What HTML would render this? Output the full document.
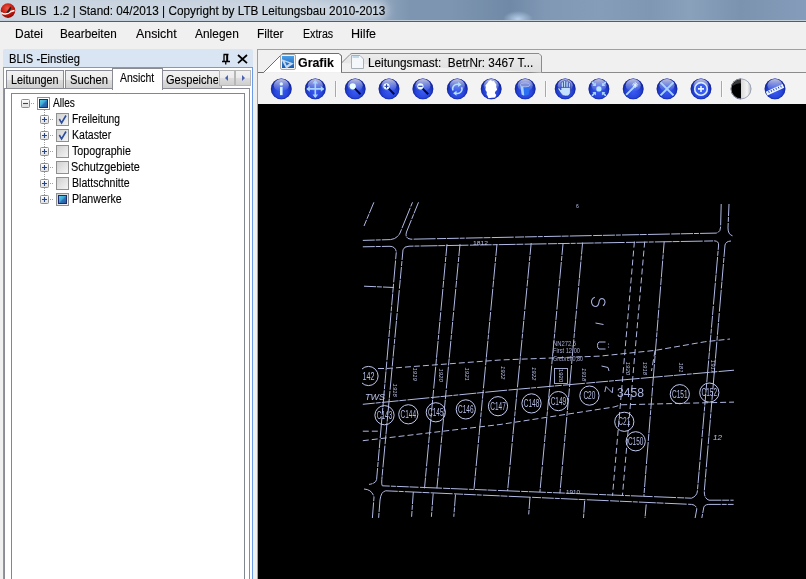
<!DOCTYPE html>
<html><head><meta charset="utf-8">
<style>
*{margin:0;padding:0;box-sizing:border-box}
html,body{width:806px;height:579px;overflow:hidden;background:#f0f0f0;font-family:"Liberation Sans",sans-serif;color:#000;position:relative}
.a{position:absolute}
.t{position:absolute;white-space:nowrap;line-height:1;-webkit-text-stroke:0.12px #000}
#title{left:0;top:0;width:806px;height:22px;overflow:hidden;background:linear-gradient(90deg,#c8d3df 0,#c3cfdc 300px,#9fb2c7 360px,#7d95b0 410px,#7d95b0 450px,#7089a6 510px,#8098b4 545px,#869dba 600px,#7f97b3 650px,#8aa1bc 690px,#7b93af 740px,#859dba 806px)}
#glow{position:absolute;left:-8px;top:2px;width:395px;height:17px;border-radius:9px;background:#cbd6e1;filter:blur(5px)}
#title:before{content:"";position:absolute;left:0;top:0;right:0;height:21px;background:radial-gradient(ellipse 15px 8px at 518px 19px,rgba(185,212,240,.95),rgba(185,212,240,0))}
#tline1{left:0;top:20px;width:806px;height:1px;background:#c3cfdb}
#tline2{left:0;top:21px;width:806px;height:1px;background:#535d6a}
.menu{font-size:12px}
.tree{font-size:12px}
</style></head>
<body>
<div id="title" class="a"><div id="glow"></div></div>
<div id="tline1" class="a"></div>
<div id="tline2" class="a"></div>
<!-- app icon -->
<svg class="a" style="left:0;top:2px" width="18" height="18" viewBox="0 0 18 18">
 <defs><radialGradient id="rg" cx="45%" cy="35%" r="65%"><stop offset="0" stop-color="#e85a4a"/><stop offset=".6" stop-color="#c81a10"/><stop offset="1" stop-color="#8a0a05"/></radialGradient></defs>
 <circle cx="8" cy="8.6" r="7.3" fill="url(#rg)"/>
 <path d="M1.2 10.6 C4 12.5 8 12 11 9.5 L14.5 8.6" stroke="#fff" stroke-width="1.6" fill="none"/>
 <path d="M6 11 L10.5 4.5 L11.5 6 L9 10.5 Z" fill="#222"/>
</svg>
<div id="tx_title" class="t" style="left:21.20px;top:5.48px;font-size:12px;color:#000;transform:scaleX(0.9805);transform-origin:0 0">BLIS&nbsp; 1.2 | Stand: 04/2013 | Copyright by LTB Leitungsbau 2010-2013</div>

<!-- menu -->
<div id="tx_datei" class="t menu" style="left:14.76px;font-size:12px;top:27.72px;transform:scaleX(0.9974);transform-origin:0 0">Datei</div>
<div id="tx_bearb" class="t menu" style="left:60.30px;font-size:12px;top:27.72px;transform:scaleX(0.9761);transform-origin:0 0">Bearbeiten</div>
<div id="tx_ans" class="t menu" style="left:136.00px;font-size:12px;top:27.72px;transform:scaleX(1.0328);transform-origin:0 0">Ansicht</div>
<div id="tx_anl" class="t menu" style="left:195.10px;font-size:12px;top:27.72px;transform:scaleX(0.9943);transform-origin:0 0">Anlegen</div>
<div id="tx_filt" class="t menu" style="left:257.08px;font-size:12px;top:27.72px;transform:scaleX(0.9943);transform-origin:0 0">Filter</div>
<div id="tx_extr" class="t menu" style="left:302.64px;font-size:12px;top:27.72px;transform:scaleX(0.8862);transform-origin:0 0">Extras</div>
<div id="tx_hilfe" class="t menu" style="left:351.30px;font-size:12px;top:27.72px;transform:scaleX(1.0453);transform-origin:0 0">Hilfe</div>

<!-- LEFT PANEL -->
<div class="a" style="left:3px;top:49px;width:250px;height:18px;background:#dae5f3;border-radius:2px 2px 0 0"></div>
<div id="tx_head" class="t" style="left:8.76px;top:53.44px;font-size:12px;transform:scaleX(0.9338);transform-origin:0 0">BLIS -Einstieg</div>
<!-- pin -->
<svg class="a" style="left:221px;top:53px" width="10" height="12" viewBox="0 0 10 12">
 <path d="M2.5 1.5 H7.5 M3 1.5 V8 M6.5 1.5 V8 M1 8.5 H9 M4.75 8.5 V11.5" stroke="#000" stroke-width="1.3" fill="none"/>
 <rect x="5.2" y="1.5" width="1.3" height="7" fill="#000"/>
</svg>
<!-- close X -->
<svg class="a" style="left:237px;top:54px" width="11" height="10" viewBox="0 0 11 10">
 <path d="M1 1 L10 9.2 M10 1 L1 9.2" stroke="#000" stroke-width="1.7" fill="none"/>
</svg>
<!-- blue border -->
<div class="a" style="left:3px;top:67px;width:250px;height:520px;border:1px solid #6c9be8;background:#fff"></div>
<!-- tab panel border -->
<div class="a" style="left:4px;top:88px;width:246px;height:500px;border:1px solid #898c95;background:#fff"></div>
<!-- tabs -->
<div class="a" style="left:6px;top:70px;width:58px;height:18px;border:1px solid #898c95;border-bottom:none;background:linear-gradient(#f2f2f2,#ebebeb 50%,#dddddd 51%,#cfcfcf)"></div>
<div id="tx_leit" class="t" style="left:11.44px;top:73.90px;font-size:12px;transform:scaleX(0.9012);transform-origin:0 0">Leitungen</div>
<div class="a" style="left:65px;top:70px;width:48px;height:18px;border:1px solid #898c95;border-bottom:none;background:linear-gradient(#f2f2f2,#ebebeb 50%,#dddddd 51%,#cfcfcf)"></div>
<div id="tx_such" class="t" style="left:70.20px;top:73.90px;font-size:12px;transform:scaleX(0.9365);transform-origin:0 0">Suchen</div>
<div class="a" style="left:162px;top:70px;width:60px;height:18px;border:1px solid #898c95;border-bottom:none;background:linear-gradient(#f2f2f2,#ebebeb 50%,#dddddd 51%,#cfcfcf)"></div>
<div class="a" style="left:163px;top:71px;width:55px;height:18px;overflow:hidden"><div id="tx_gesp" class="t" style="left:3.2px;top:2.9px;font-size:12px;transform:scaleX(0.92);transform-origin:0 0">Gespeicherte</div></div>
<div class="a" style="left:112px;top:68px;width:51px;height:22px;border:1px solid #898c95;border-bottom:none;background:#fff"></div>
<div id="tx_anstab" class="t" style="left:119.80px;top:72.14px;font-size:12px;transform:scaleX(0.8708);transform-origin:0 0">Ansicht</div>
<!-- scroll buttons -->
<div class="a" style="left:219px;top:70px;width:16px;height:16px;border:1px solid #b7b7b7;background:linear-gradient(#f2f2f2,#ebebeb 50%,#dddddd 51%,#cfcfcf)"></div>
<div class="a" style="left:235px;top:70px;width:16px;height:16px;border:1px solid #b7b7b7;background:linear-gradient(#f2f2f2,#ebebeb 50%,#dddddd 51%,#cfcfcf)"></div>
<svg class="a" style="left:219px;top:70px" width="32" height="16" viewBox="0 0 32 16">
 <path d="M9 5 L6 8 L9 11 Z" fill="#4a62b0"/>
 <path d="M23 5 L26 8 L23 11 Z" fill="#4a62b0"/>
</svg>
<!-- tree box -->
<div class="a" style="left:11px;top:93px;width:234px;height:500px;border:1px solid #82868f;background:#fff"></div>

<!-- tree -->
<svg class="a" style="left:12px;top:94px" width="120" height="120" viewBox="12 94 120 120">
 <defs>
  <linearGradient id="cbg" x1="0" y1="0" x2="1" y2="1"><stop offset="0" stop-color="#62d8e0"/><stop offset=".49" stop-color="#3aa2d8"/><stop offset=".51" stop-color="#2f78bc"/><stop offset="1" stop-color="#2a5298"/></linearGradient>
  <linearGradient id="cbb" x1="0" y1="0" x2="1" y2="1"><stop offset="0" stop-color="#cfcfcf"/><stop offset="1" stop-color="#f6f6f6"/></linearGradient>
  <linearGradient id="pbx" x1="0" y1="0" x2="0" y2="1"><stop offset="0" stop-color="#fff"/><stop offset="1" stop-color="#e0e0e0"/></linearGradient>
 </defs>
 <!-- minus box Alles -->
 <rect x="21.5" y="99.5" width="8" height="8" rx="1" fill="url(#pbx)" stroke="#8e8f8f"/>
 <path d="M23 103.5 H28" stroke="#26448e" stroke-width="1.1"/>
 <path d="M31 103.5 h1 M33 103.5 h1" stroke="#a0a0a0"/>
 <!-- Alles checkbox -->
 <rect x="37.5" y="97.5" width="12" height="12" fill="#fff" stroke="#8e8f8f"/>
 <rect x="39.5" y="99.5" width="8" height="8" fill="url(#cbg)" stroke="#1c2c70" stroke-width="1"/>
 <!-- vertical dotted line -->
 <path d="M44.5 110 V200" stroke="#a0a0a0" stroke-dasharray="1 1"/>
 <rect x="40.5" y="115.5" width="8" height="8" rx="1" fill="url(#pbx)" stroke="#8e8f8f"/>
 <path d="M42 119.5 H47 M44.5 117.0 V122.0" stroke="#26448e" stroke-width="1.1"/>
 <path d="M50 119.5 h1 M52 119.5 h1" stroke="#a0a0a0"/>
 <rect x="56.5" y="113.5" width="12" height="12" fill="url(#cbb)" stroke="#8e8f8f"/>
 <path d="M59.3 119 L61.6 123 L66 115.5" stroke="#2c4c9c" stroke-width="1.6" fill="none"/>
 <rect x="40.5" y="131.5" width="8" height="8" rx="1" fill="url(#pbx)" stroke="#8e8f8f"/>
 <path d="M42 135.5 H47 M44.5 133.0 V138.0" stroke="#26448e" stroke-width="1.1"/>
 <path d="M50 135.5 h1 M52 135.5 h1" stroke="#a0a0a0"/>
 <rect x="56.5" y="129.5" width="12" height="12" fill="url(#cbb)" stroke="#8e8f8f"/>
 <path d="M59.3 135 L61.6 139 L66 131.5" stroke="#2c4c9c" stroke-width="1.6" fill="none"/>
 <rect x="40.5" y="147.5" width="8" height="8" rx="1" fill="url(#pbx)" stroke="#8e8f8f"/>
 <path d="M42 151.5 H47 M44.5 149.0 V154.0" stroke="#26448e" stroke-width="1.1"/>
 <path d="M50 151.5 h1 M52 151.5 h1" stroke="#a0a0a0"/>
 <rect x="56.5" y="145.5" width="12" height="12" fill="url(#cbb)" stroke="#8e8f8f"/>
 <rect x="40.5" y="163.5" width="8" height="8" rx="1" fill="url(#pbx)" stroke="#8e8f8f"/>
 <path d="M42 167.5 H47 M44.5 165.0 V170.0" stroke="#26448e" stroke-width="1.1"/>
 <path d="M50 167.5 h1 M52 167.5 h1" stroke="#a0a0a0"/>
 <rect x="56.5" y="161.5" width="12" height="12" fill="url(#cbb)" stroke="#8e8f8f"/>
 <rect x="40.5" y="179.5" width="8" height="8" rx="1" fill="url(#pbx)" stroke="#8e8f8f"/>
 <path d="M42 183.5 H47 M44.5 181.0 V186.0" stroke="#26448e" stroke-width="1.1"/>
 <path d="M50 183.5 h1 M52 183.5 h1" stroke="#a0a0a0"/>
 <rect x="56.5" y="177.5" width="12" height="12" fill="url(#cbb)" stroke="#8e8f8f"/>
 <rect x="40.5" y="195.5" width="8" height="8" rx="1" fill="url(#pbx)" stroke="#8e8f8f"/>
 <path d="M42 199.5 H47 M44.5 197.0 V202.0" stroke="#26448e" stroke-width="1.1"/>
 <path d="M50 199.5 h1 M52 199.5 h1" stroke="#a0a0a0"/>
 <rect x="56.5" y="193.5" width="12" height="12" fill="url(#cbb)" stroke="#8e8f8f"/>
 <rect x="58.5" y="195.5" width="8" height="8" fill="url(#cbg)" stroke="#1c2c70" stroke-width="1"/>
</svg>
<div id="tx_alles" class="t tree" style="left:53.00px;top:96.96px;font-size:12px;transform:scaleX(0.8431);transform-origin:0 0">Alles</div>
<div id="tx_frei" class="t tree" style="left:71.64px;top:112.96px;font-size:12px;transform:scaleX(0.8575);transform-origin:0 0">Freileitung</div>
<div id="tx_kat" class="t tree" style="left:71.64px;top:128.96px;font-size:12px;transform:scaleX(0.8780);transform-origin:0 0">Kataster</div>
<div id="tx_topo" class="t tree" style="left:72.28px;top:144.96px;font-size:12px;transform:scaleX(0.8911);transform-origin:0 0">Topographie</div>
<div id="tx_schutz" class="t tree" style="left:71.48px;top:160.96px;font-size:12px;transform:scaleX(0.9060);transform-origin:0 0">Schutzgebiete</div>
<div id="tx_blatt" class="t tree" style="left:71.64px;top:176.96px;font-size:12px;transform:scaleX(0.8799);transform-origin:0 0">Blattschnitte</div>
<div id="tx_plan" class="t tree" style="left:71.64px;top:192.96px;font-size:12px;transform:scaleX(0.8863);transform-origin:0 0">Planwerke</div>

<!-- RIGHT PANEL -->
<div class="a" style="left:257px;top:49px;width:560px;height:540px;border:1px solid #a0a0a0;background:#f0f0f0"></div>
<div class="a" style="left:258px;top:73px;width:548px;height:31px;background:#f3f3f3"></div>
<div class="a" style="left:258px;top:104px;width:548px;height:475px;background:#000"></div>
<!--MAP--><svg class="a" style="left:258px;top:104px;will-change:transform" width="548" height="475" viewBox="258 104 548 475">
<defs><clipPath id="mc"><rect x="362" y="195" width="380" height="330"/></clipPath></defs>
<g clip-path="url(#mc)" fill="none" stroke="#b2bae4" stroke-width="1" stroke-dasharray="12 .9 5 1.1 17 .7 7 1.2 22 1.4 9 .8">
<path d="M362.8 240.4 L390.5 239.6 Q397 239 400 233 L412.5 202.3"/>
<path d="M418.5 202.3 L406.5 232 Q404.5 238.8 411 239.2 L716 233.1 Q720.5 232.5 720.6 227 L721.2 204"/>
<path d="M729 204 L728 228 Q728 234.5 732.5 235.8"/>
<path d="M362.8 246.8 L390 246.3 Q395.5 246.5 396.3 252 L376.6 479.5 Q376 483.5 369 484.4"/>
<path d="M403 249.8 Q404 246.3 409 246.2 L714.7 240.9 Q718.8 241.2 718.6 245 L697.4 491 Q697 496 691.5 498.2 L382.3 485.8 Q381.4 485 381.8 479.5 L403 249.8"/>
<path d="M725 245 Q725.8 241.3 731 241 M725 245 L704.3 491 Q704 498.5 709 500.2 L733.6 500.2"/>
<path d="M385.8 490.8 L691.5 504.4 Q696 504.6 696.8 509 L695.1 518"/>
<path d="M380 500 Q381 491.5 385.8 490.8 M380 500 L378.6 518"/>
<path d="M364 489 Q372 489.5 374 497 L372.4 518"/>
<path d="M708.8 504.4 Q703.5 504.6 703.5 509 L701.8 518 M708.8 504.4 L733.6 504.4"/>
<path d="M373.9 202.3 L364 226"/>
<path d="M364 286.2 L393.9 287.5"/>
<path d="M447 244.2 L424.5 488.3"/>
<path d="M460 244.2 L436.9 488.3"/>
<path d="M497 244 L474 488.8"/>
<path d="M531.2 243 L507.6 490.8"/>
<path d="M563.1 243 L539.9 492"/>
<path d="M582.6 242.6 L559.9 493.3"/>
<path d="M664.2 241.6 L643.8 497"/>
<path d="M413.3 492 L411.6 516.8"/>
<path d="M433.2 493.3 L431.4 516.8"/>
<path d="M455.5 494.5 L453.8 516.8"/>
<path d="M530 497 L528.7 514.4"/>
<path d="M584.7 500.7 L583.5 518"/>
<path d="M646.2 504.4 L645 518"/>
<path d="M362.8 404.3 L500 390.8 L640 378.4 L734 370.2"/>
</g>
<g clip-path="url(#mc)" fill="none" stroke="#b0b8e0" stroke-width="1" stroke-dasharray="6 3">
<path d="M634.4 241.6 L612.5 495.8"/>
<path d="M644.7 241.6 L622.4 495.8"/>
<path d="M378 368.5 L386.6 368.5 L500 360 L600 356.1 L655.1 350.4 L704.5 341.8 L730 339"/>
<path d="M362.8 440.7 L500 424.5 L614 407 L620.9 404.8 L734 402.1"/>
<path d="M362.8 431.2 L378 431.2"/>
<path d="M655.1 350.4 L651.5 371"/>
</g>
<g clip-path="url(#mc)" fill="none" stroke="#c0c8ee" stroke-width="1">
<circle cx="368.5" cy="376" r="9.6"/>
<circle cx="384.5" cy="415.2" r="9.6"/>
<circle cx="408.3" cy="414.3" r="9.6"/>
<circle cx="435.8" cy="412.3" r="9.6"/>
<circle cx="465.8" cy="409.4" r="9.6"/>
<circle cx="498" cy="406.2" r="9.6"/>
<circle cx="531.5" cy="403.4" r="9.6"/>
<circle cx="558.4" cy="401.1" r="9.6"/>
<circle cx="589.4" cy="395.6" r="9.6"/>
<circle cx="679.8" cy="394.2" r="9.6"/>
<circle cx="709.3" cy="392.6" r="9.6"/>
<circle cx="624.3" cy="421.8" r="9.6"/>
<circle cx="635.7" cy="441.3" r="9.6"/>
</g>
<g clip-path="url(#mc)" fill="#b4bce4" font-family="Liberation Sans" font-size="10" text-anchor="middle">
<text x="368.5" y="379.6" textLength="12" lengthAdjust="spacingAndGlyphs">142</text>
<text x="384.5" y="418.8" textLength="15.5" lengthAdjust="spacingAndGlyphs">C143</text>
<text x="408.3" y="417.90000000000003" textLength="15.5" lengthAdjust="spacingAndGlyphs">C144</text>
<text x="435.8" y="415.90000000000003" textLength="15.5" lengthAdjust="spacingAndGlyphs">C145</text>
<text x="465.8" y="413.0" textLength="15.5" lengthAdjust="spacingAndGlyphs">C146</text>
<text x="498" y="409.8" textLength="15.5" lengthAdjust="spacingAndGlyphs">C147</text>
<text x="531.5" y="407.0" textLength="15.5" lengthAdjust="spacingAndGlyphs">C148</text>
<text x="558.4" y="404.70000000000005" textLength="15.5" lengthAdjust="spacingAndGlyphs">C149</text>
<text x="589.4" y="399.20000000000005" textLength="12" lengthAdjust="spacingAndGlyphs">C20</text>
<text x="679.8" y="397.8" textLength="15.5" lengthAdjust="spacingAndGlyphs">C151</text>
<text x="709.3" y="396.20000000000005" textLength="15.5" lengthAdjust="spacingAndGlyphs">C152</text>
<text x="624.3" y="425.40000000000003" textLength="12" lengthAdjust="spacingAndGlyphs">C21</text>
<text x="635.7" y="444.90000000000003" textLength="15.5" lengthAdjust="spacingAndGlyphs">C150</text>
</g>
<g clip-path="url(#mc)" fill="#b8c0e6" font-family="Liberation Sans">
<text x="394.8" y="390.3" font-size="6" transform="rotate(90 394.8 390.3)" text-anchor="middle" dominant-baseline="central" font-style="italic">1918</text>
<text x="414.7" y="374.2" font-size="6" transform="rotate(90 414.7 374.2)" text-anchor="middle" dominant-baseline="central" font-style="italic">1919</text>
<text x="440.7" y="375.1" font-size="6" transform="rotate(90 440.7 375.1)" text-anchor="middle" dominant-baseline="central" font-style="italic">1920</text>
<text x="466.8" y="374.2" font-size="6" transform="rotate(90 466.8 374.2)" text-anchor="middle" dominant-baseline="central" font-style="italic">1921</text>
<text x="502.8" y="372.7" font-size="6" transform="rotate(90 502.8 372.7)" text-anchor="middle" dominant-baseline="central" font-style="italic">1922</text>
<text x="534.2" y="373.7" font-size="6" transform="rotate(90 534.2 373.7)" text-anchor="middle" dominant-baseline="central" font-style="italic">1922</text>
<text x="583.6" y="374.6" font-size="6" transform="rotate(90 583.6 374.6)" text-anchor="middle" dominant-baseline="central" font-style="italic">1918</text>
<text x="628.1" y="368.4" font-size="6" transform="rotate(90 628.1 368.4)" text-anchor="middle" dominant-baseline="central" font-style="italic">1920</text>
<text x="644.6" y="368.4" font-size="6" transform="rotate(90 644.6 368.4)" text-anchor="middle" dominant-baseline="central" font-style="italic">1918</text>
<text x="680.7" y="367.5" font-size="6" transform="rotate(90 680.7 367.5)" text-anchor="middle" dominant-baseline="central" font-style="italic">181</text>
<text x="713" y="366.5" font-size="6" transform="rotate(90 713 366.5)" text-anchor="middle" dominant-baseline="central" font-style="italic">1917</text>
<text x="365" y="400" font-size="9" font-style="italic" textLength="20" lengthAdjust="spacingAndGlyphs">TWS</text>
<text x="617" y="397" font-size="13" textLength="27" lengthAdjust="spacingAndGlyphs" font-weight="normal" fill="#aab2dc">3458</text>
<path d="M604.8 392 L606 386.5 L612.3 392.8 L612.8 387.2" stroke="#a8b0dc" stroke-width="1" fill="none"/>
<path d="M594.8 297.2 Q591.3 298.8 591.5 302 Q592 306.5 596 306.5 Q598.5 306 599 302 Q599.5 298.5 602 298.5 Q605 299 605 302.5 Q604.8 304.5 603 305.8" stroke="#a8b0dc" stroke-width="1.1" fill="none"/>
<path d="M595.5 323 L603.5 324.5" stroke="#b0b8e0" stroke-width="1"/>
<path d="M605.5 342 L599 342 Q597.5 342.5 597.5 345.5 Q597.5 348.5 599 349 L605.5 349" stroke="#b0b8e0" stroke-width="1" fill="none"/><circle cx="608.5" cy="344" r=".6" fill="#b0b8e0"/><circle cx="608.5" cy="347" r=".6" fill="#b0b8e0"/>
<path d="M601.5 366 L608 367.5 L609 371" stroke="#b0b8e0" stroke-width="1" fill="none"/>
<text x="473" y="245" font-size="6" textLength="15" lengthAdjust="spacingAndGlyphs">1812</text>
<text x="566" y="494" font-size="6" textLength="14" lengthAdjust="spacingAndGlyphs">1910</text>
<text x="713" y="440" font-size="8" font-style="italic">12</text>
<text x="576" y="208" font-size="5">6</text>

</g>
<g fill="#a6abd2" font-family="Liberation Sans" font-size="7.2">
<text x="553" y="345.5" textLength="23" lengthAdjust="spacingAndGlyphs">NN272,5</text>
<text x="553" y="353" textLength="27" lengthAdjust="spacingAndGlyphs">First 12,00</text>
<text x="553" y="360.5" textLength="30" lengthAdjust="spacingAndGlyphs">Grebrel 0,80</text>
</g>
<rect x="554.5" y="368.5" width="13" height="15" fill="none" stroke="#b0b8e0" stroke-width=".9"/>
<text x="560.8" y="375.6" font-size="6" transform="rotate(90 560.8 375.6)" text-anchor="middle" dominant-baseline="central" fill="#b8c0e6" font-family="Liberation Sans">1920</text>
</svg><!--/MAP-->
<!-- right tab strip -->
<svg class="a" style="left:258px;top:50px" width="548" height="54" viewBox="258 50 548 54">
 <defs>
  <linearGradient id="tabsel" x1="0" y1="0" x2="0" y2="1"><stop offset="0" stop-color="#ffffff"/><stop offset="1" stop-color="#ffffff"/></linearGradient>
  <linearGradient id="tabun" x1="0" y1="0" x2="0" y2="1"><stop offset="0" stop-color="#ececec"/><stop offset="1" stop-color="#e0e0e0"/></linearGradient>
  <radialGradient id="sph" cx="50%" cy="62%" r="52%"><stop offset="0" stop-color="#3a5cf4"/><stop offset=".6" stop-color="#2846dc"/><stop offset=".85" stop-color="#1a34bc"/><stop offset="1" stop-color="#1428a0"/></radialGradient>
  <linearGradient id="hl" x1="0" y1="0" x2="0" y2="1"><stop offset="0" stop-color="#fff" stop-opacity=".72"/><stop offset=".55" stop-color="#fff" stop-opacity=".3"/><stop offset="1" stop-color="#fff" stop-opacity="0"/></linearGradient>
  <linearGradient id="icog" x1="0" y1="0" x2="0" y2="1"><stop offset="0" stop-color="#4aa0ea"/><stop offset="1" stop-color="#1858b0"/></linearGradient>
  <linearGradient id="cg" x1="0" y1="0" x2="1" y2="0"><stop offset="0" stop-color="#000"/><stop offset=".5" stop-color="#000"/><stop offset=".5" stop-color="#d8d8d8"/><stop offset=".8" stop-color="#f4f4f4"/><stop offset="1" stop-color="#b8b8b8"/></linearGradient>
  <g id="ball"><circle r="10.4" fill="url(#sph)"/><circle r="10" fill="none" stroke="#1424a0" stroke-width=".8" stroke-opacity=".5"/><ellipse cx="0" cy="-3.6" rx="7.6" ry="6.2" fill="url(#hl)"/></g>
 </defs>
 <!-- tab line -->
 <path d="M258 72.5 H263.5 L281.5 54.5 Q282.5 53.5 284 53.5 H339 L341.5 56 V72.5 H806" fill="none" stroke="#8b8b8b"/>
 <path d="M264 72 L282 54 H339 L341 56 V72 Z" fill="#fff"/>
 <path d="M341.5 63 L350 54.5 Q351 53.5 352 53.5 H539 L541.5 56 V72.5" fill="url(#tabun)" stroke="#8b8b8b"/>
 <path d="M258 72.5 H263.5 L281.5 54.5 Q282.5 53.5 284 53.5 H339 L341.5 56 V72.5" fill="none" stroke="#6e6e6e"/>
 <!-- grafik icon -->
 <rect x="280.5" y="54.5" width="15" height="15" rx="1.5" fill="#f4f4f4" stroke="#a8a8a8"/>
 <rect x="282" y="56" width="12" height="12" fill="url(#icog)"/>
 <path d="M281.2 59 L293.8 63.6 L286.2 68.8 Z M284.8 61.6 L289.6 63.5 L286.6 65.6 Z" fill="#c4d8ee" fill-rule="evenodd"/>
 <!-- page icon -->
 <path d="M351.5 55.5 H360 L363.5 59 V68.5 H351.5 Z" fill="#f4f8fb" stroke="#a8b0b8"/>
 <path d="M352.5 57 H359" stroke="#9cc4dc" stroke-width="1.2"/>
 <!-- toolbar separators -->
 <path d="M335.5 81 V97 M545.5 81 V97 M721.5 81 V97" stroke="#a8a8a8"/>
 <path d="M336.5 81 V97 M546.5 81 V97 M722.5 81 V97" stroke="#fafafa"/>
 <!-- icons -->
 <g transform="translate(281.3 88.9)"><use href="#ball"/><circle cx="0" cy="-5" r="1.7" fill="#e0f6ff"/><path d="M-1.3 -2 H1.3 V6.2 H-1.3 Z" fill="#d0f0ff"/></g>
 <g transform="translate(315.3 88.9)"><use href="#ball"/><path d="M0 -8 V8 M-8 0 H8" stroke="#a8d2ff" stroke-width="1.6"/><path d="M0 -9 L-2.8 -5.5 H2.8Z M0 9 L-2.8 5.5 H2.8Z M-9 0 L-5.5 -2.8 V2.8Z M9 0 L5.5 -2.8 V2.8Z" fill="#a8d2ff"/></g>
 <g transform="translate(355.2 88.9)"><use href="#ball"/><path d="M-0.5 -0.5 L5.3 5.3" stroke="#000a40" stroke-width="2"/><circle cx="-2.5" cy="-2.6" r="3.1" fill="#eaffff"/></g>
 <g transform="translate(389 88.9)"><use href="#ball"/><path d="M-0.5 -0.5 L5.3 5.3" stroke="#000a40" stroke-width="2"/><circle cx="-2.5" cy="-2.6" r="3.1" fill="#eaffff"/><path d="M-4.5 -2.6 H-0.5 M-2.5 -4.6 V-0.6" stroke="#2a3ab0" stroke-width="1"/></g>
 <g transform="translate(422.9 88.9)"><use href="#ball"/><path d="M-0.5 -0.5 L5.3 5.3" stroke="#000a40" stroke-width="2"/><circle cx="-2.5" cy="-2.6" r="3.1" fill="#eaffff"/><path d="M-4.6 -2.6 H-0.4" stroke="#2a3ab0" stroke-width="1.2"/></g>
 <g transform="translate(457.3 88.9)"><use href="#ball"/><path d="M1.2 -4.4 A4.5 4.5 0 0 0 -4.3 1.6 M-1.2 4.4 A4.5 4.5 0 0 0 4.3 -1.6" stroke="#b4e0ff" stroke-width="1.5" fill="none"/><path d="M0.8 -6.9 L4.2 -4.3 L0.8 -1.9Z M-0.8 6.9 L-4.2 4.3 L-0.8 1.9Z" fill="#b4e0ff"/></g>
 <g transform="translate(491.2 88.9)"><use href="#ball"/><path d="M-2.5 -8 L-0.5 -8.8 L1.2 -7.6 L2.8 -8 L3.8 -6.2 L5.2 -4.5 L5 -1.8 L6 0.8 L4.2 2.6 L3.6 4 L5 6.2 L4 8.6 L0.5 8.8 L-2.8 9.3 L-3.6 7.2 L-4.6 5.6 L-4.4 3.2 L-5.8 1.2 L-5.4 -1.6 L-5.8 -3.6 L-4.4 -5.2 L-3.4 -6.4 Z" fill="#fff"/></g>
 <g transform="translate(525.2 88.9)"><use href="#ball"/><path d="M-5 -4 L-3.5 5.5 Q0 7.5 3.5 5.5 L5 -4 Z" fill="#2a70f0"/><path d="M-5 -4 L-3.5 5.5 Q-2 6.5 -1 6.5 L-2 -3.5 Z" fill="#a8d0ff"/><ellipse cx="0" cy="-4" rx="5" ry="2" fill="#8090d8" stroke="#c0d0ff" stroke-width=".6"/></g>
 <g transform="translate(565.2 88.9)"><use href="#ball"/><g fill="#c4e2ff" stroke="#1a2c90" stroke-width=".6"><path d="M-4 -1 V-6 Q-4 -7.2 -2.9 -7.2 Q-1.8 -7.2 -1.8 -6 V-1 Z"/><path d="M-1.6 -1 V-7.4 Q-1.6 -8.6 -0.5 -8.6 Q0.6 -8.6 0.6 -7.4 V-1 Z"/><path d="M0.8 -1 V-7 Q0.8 -8.2 1.9 -8.2 Q3 -8.2 3 -7 V-1 Z"/><path d="M3.2 -0.5 V-5.2 Q3.2 -6.3 4.2 -6.3 Q5.2 -6.3 5.2 -5.2 V1 Z"/><path d="M-4.2 -1.5 H5.2 V3 Q5 7.2 0.5 7.2 Q-2.5 7.2 -4 5 L-7.2 0.2 Q-7.5 -1 -6.4 -1.2 Q-5.4 -1 -4.2 1 Z"/></g></g>
 <g transform="translate(598.9 88.9)"><use href="#ball"/><circle r="2.6" fill="#b8e8ff"/><path d="M-7 -7 L-3.5 -3.5 M7 -7 L3.5 -3.5 M-7 7 L-3.5 3.5 M7 7 L3.5 3.5" stroke="#a8d4ff" stroke-width="1.6"/><path d="M-3 -3 H-6.5 L-3 -6.5Z M3 -3 H6.5 L3 -6.5Z M-3 3 H-6.5 L-3 6.5Z M3 3 H6.5 L3 6.5Z" fill="#a8d4ff"/></g>
 <g transform="translate(633.2 88.9)"><use href="#ball"/><path d="M-7 6 L3 -4" stroke="#b0dcff" stroke-width="1.8"/><path d="M2 -7 V-1 M-1 -4 H5 M0 -6 L4 -2 M4 -6 L0 -2" stroke="#e0f4ff" stroke-width=".9"/></g>
 <g transform="translate(667 88.9)"><use href="#ball"/><path d="M-6.5 -6.5 L6.5 6.5 M6.5 -6.5 L-6.5 6.5" stroke="#a8d4ff" stroke-width="2"/></g>
 <g transform="translate(701 88.9)"><use href="#ball"/><circle r="6.3" fill="#3a5cf0" stroke="#d8ecff" stroke-width="1.6"/><path d="M-3 0 H3 M0 -3 V3" stroke="#e8f6ff" stroke-width="1.6"/></g>
 <g transform="translate(741 88.9)"><circle r="10.3" fill="url(#cg)"/><circle r="10" fill="none" stroke="#9aa0b8" stroke-width=".9"/><path d="M0 -9.5 A9.5 9.5 0 0 0 -8.5 -3 Q-4 -6 0 -5.5 Z" fill="#fff" fill-opacity=".22"/></g>
 <g transform="translate(775 88.9)"><use href="#ball"/><path d="M-9.2 2.8 L7.6 -4.8 L9.2 -1.2 L-7.6 6.6 Z" fill="#e8f4ff"/><path d="M-6.4 2.2 L-5.7 4 M-4 1.1 L-3.3 2.9 M-1.6 0 L-0.9 1.8 M0.8 -1.1 L1.5 0.7 M3.2 -2.2 L3.9 -0.4 M5.6 -3.3 L6.3 -1.5" stroke="#2442d8" stroke-width="1"/></g>
</svg>
<div id="tx_grafik" class="t" style="left:298.42px;top:56.96px;font-size:12px;font-weight:bold;transform:scaleX(1.0333);transform-origin:0 0">Grafik</div>
<div id="tx_lm" class="t" style="left:368.20px;top:57.20px;font-size:12px;transform:scaleX(0.9808);transform-origin:0 0">Leitungsmast:&nbsp; BetrNr: 3467 T...</div>

</body></html>
